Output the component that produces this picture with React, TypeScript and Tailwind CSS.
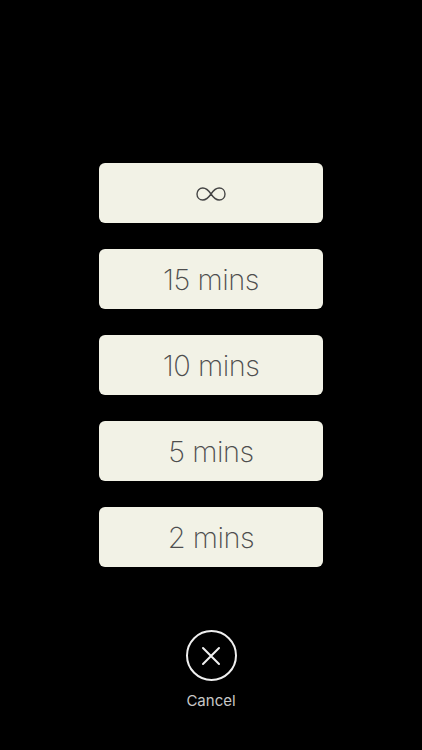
import React from "react";

const items = ["∞", "15 mins", "10 mins", "5 mins", "2 mins"];

export default function App() {
  return (
    <div className="w-[422px] h-[750px] bg-black flex flex-col items-center pt-[163px]" style={{ fontFamily: "Inter, 'Noto Sans', sans-serif" }}>
      <div className="flex flex-col gap-[26px]">
        {items.map((t) => (
          <button
            key={t}
            className="w-[224px] h-[60px] rounded-[6px] bg-[#f2f2e6] flex items-center justify-center text-[#4e4e4e] font-extralight text-[29px] tracking-[-0.5px] pt-[2px]"
          >
            {t === "∞" ? (
              <svg width="30" height="14" viewBox="0 0 30 14" fill="none" stroke="#444" strokeWidth="1.4">
                <path d="M15 7 C12 2.5 9.5 1 6.8 1 C3.5 1 1 3.5 1 7 C1 10.5 3.5 13 6.8 13 C9.5 13 12 11.5 15 7 C18 2.5 20.5 1 23.2 1 C26.5 1 29 3.5 29 7 C29 10.5 26.5 13 23.2 13 C20.5 13 18 11.5 15 7 Z" />
              </svg>
            ) : (
              t
            )}
          </button>
        ))}
      </div>
      <div className="mt-[63px] flex flex-col items-center">
        <div className="w-[51px] h-[51px] rounded-full border-2 border-[#f0f0f0] flex items-center justify-center">
          <svg width="20" height="20" viewBox="0 0 20 20" stroke="#f0f0f0" strokeWidth="2" strokeLinecap="round">
            <path d="M2 2 L18 18 M18 2 L2 18" />
          </svg>
        </div>
        <div className="mt-[12px] text-[15px] text-[#c8c8c8] leading-none">Cancel</div>
      </div>
    </div>
  );
}
